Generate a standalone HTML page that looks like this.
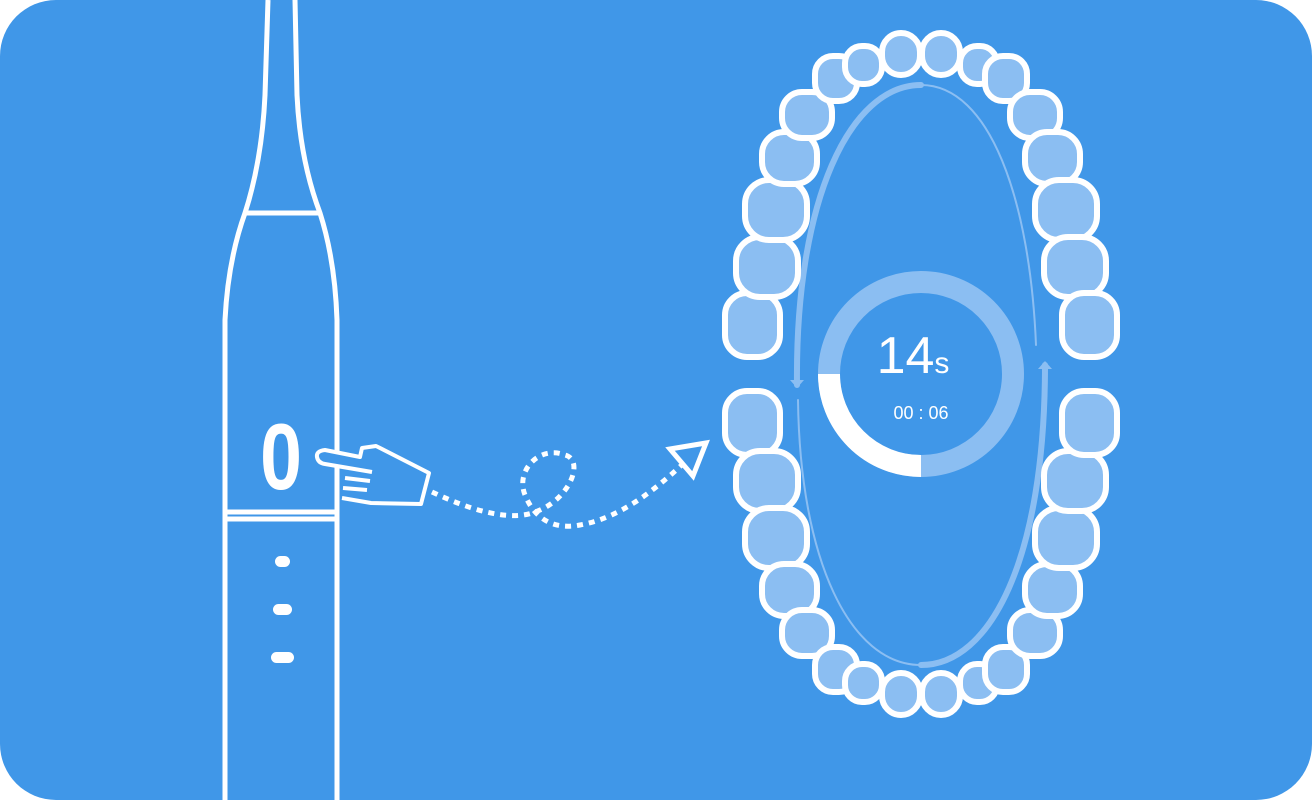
<!DOCTYPE html>
<html><head><style>
html,body{margin:0;padding:0;background:#fff;}
body{width:1312px;height:800px;overflow:hidden;}
</style></head><body>
<svg width="1312" height="800" viewBox="0 0 1312 800" xmlns="http://www.w3.org/2000/svg">
<rect x="0" y="0" width="1312" height="800" rx="56" fill="#4097E8"/>
<g fill="none" stroke="#fff" stroke-width="5" stroke-linejoin="round">
<path d="M268 0 L265 95 Q262 160 245 213 Q228 260 225 320 L225 800"/>
<path d="M295 0 L297 95 Q300 160 320 213 Q335 260 337 320 L337 800"/>
<path d="M245 213 L320 213"/>
<path d="M225 512 L337 512 M225 519 L337 519"/>
</g>
<text transform="translate(281 489) scale(0.8 1)" text-anchor="middle" font-family="Liberation Sans, sans-serif" font-weight="bold" font-size="94" fill="#fff">0</text>
<g fill="#fff">
<rect x="275" y="556" width="15" height="11" rx="5.5"/>
<rect x="273" y="604" width="19" height="11" rx="5.5"/>
<rect x="271" y="652" width="23" height="11" rx="5.5"/>
</g>
<g fill="#4097E8" stroke="#fff" stroke-width="4" stroke-linejoin="round">
<path d="M342 498 L371 503 L421 504 L429 473 L376 446 L362 448 L360 457 L325 450 Q316 451 317 457 Q318 463 325 464 L372 472"/>
<path d="M345 478 L370 481 M343 488 L367 490" fill="none"/>
</g>
<path d="M432 492 C470 510 510 522 535 512 C570 500 585 460 565 455 C540 445 515 470 525 495 C535 520 555 530 580 525 C620 518 655 490 685 462" fill="none" stroke="#fff" stroke-width="5" stroke-dasharray="6 6"/>
<path d="M670 449 L706 443 L693 476 Z" fill="none" stroke="#fff" stroke-width="5" stroke-linejoin="miter"/>
<g fill="none" stroke="#8BBEF2" stroke-linecap="round">
<path d="M797 385 C795 200 850 85 921 85" stroke-width="6"/>
<path d="M921 85 C990 85 1030 200 1036 345" stroke-width="2"/>
<path d="M1045 365 C1045 560 990 665 921 665" stroke-width="6"/>
<path d="M921 665 C850 665 800 560 798 400" stroke-width="2"/>
</g>
<path d="M790 380 L804 380 L797 388 Z" fill="#8BBEF2"/>
<path d="M1038 369 L1052 369 L1045 361 Z" fill="#8BBEF2"/>
<g fill="#8BBEF2" stroke="#fff" stroke-width="6">
<rect x="725" y="293" width="55" height="64" rx="22"/>
<rect x="736" y="237" width="62" height="60" rx="24"/>
<rect x="745" y="180" width="62" height="60" rx="24"/>
<rect x="762" y="132" width="55" height="52" rx="22"/>
<rect x="782" y="92" width="50" height="46" rx="20"/>
<rect x="815" y="56" width="42" height="45" rx="18"/>
<rect x="845" y="46" width="37" height="38" rx="17"/>
<rect x="882" y="33" width="38" height="42" rx="19"/>
<rect x="922" y="33" width="38" height="42" rx="19"/>
<rect x="960" y="46" width="37" height="38" rx="17"/>
<rect x="985" y="56" width="42" height="45" rx="18"/>
<rect x="1010" y="92" width="50" height="46" rx="20"/>
<rect x="1025" y="132" width="55" height="52" rx="22"/>
<rect x="1035" y="180" width="62" height="60" rx="24"/>
<rect x="1044" y="237" width="62" height="60" rx="24"/>
<rect x="1062" y="293" width="55" height="64" rx="22"/>

<rect x="725" y="391" width="55" height="64" rx="22"/>
<rect x="736" y="451" width="62" height="60" rx="24"/>
<rect x="745" y="508" width="62" height="60" rx="24"/>
<rect x="762" y="564" width="55" height="52" rx="22"/>
<rect x="782" y="610" width="50" height="46" rx="20"/>
<rect x="815" y="647" width="42" height="45" rx="18"/>
<rect x="845" y="664" width="37" height="38" rx="17"/>
<rect x="882" y="673" width="38" height="42" rx="19"/>
<rect x="922" y="673" width="38" height="42" rx="19"/>
<rect x="960" y="664" width="37" height="38" rx="17"/>
<rect x="985" y="647" width="42" height="45" rx="18"/>
<rect x="1010" y="610" width="50" height="46" rx="20"/>
<rect x="1025" y="564" width="55" height="52" rx="22"/>
<rect x="1035" y="508" width="62" height="60" rx="24"/>
<rect x="1044" y="451" width="62" height="60" rx="24"/>
<rect x="1062" y="391" width="55" height="64" rx="22"/>
</g>
<circle cx="921" cy="374" r="92" fill="none" stroke="#8BBEF2" stroke-width="22"/>
<path d="M829 374 A92 92 0 0 0 921 466" fill="none" stroke="#fff" stroke-width="22"/>
<text x="913" y="373" text-anchor="middle" font-family="Liberation Sans, sans-serif" font-size="52" fill="#fff">14<tspan font-size="30">s</tspan></text>
<text x="921" y="419" text-anchor="middle" font-family="Liberation Sans, sans-serif" font-size="18" fill="#fff">00 : 06</text>
</svg>
</body></html>
